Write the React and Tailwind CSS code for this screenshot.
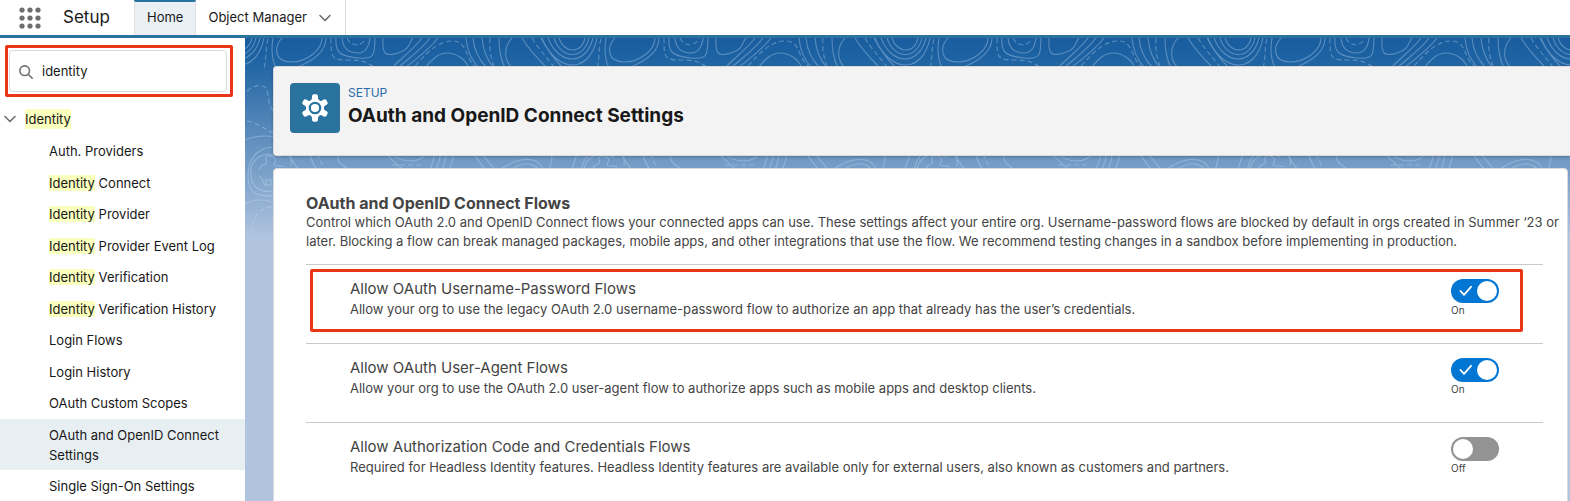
import { useState } from "react";

const navItems = [
  { rest: "Auth. Providers" },
  { mark: true, rest: " Connect" },
  { mark: true, rest: " Provider" },
  { mark: true, rest: " Provider Event Log" },
  { mark: true, rest: " Verification" },
  { mark: true, rest: " Verification History" },
  { rest: "Login Flows" },
  { rest: "Login History" },
  { rest: "OAuth Custom Scopes" },
  { rest: "OAuth and OpenID Connect Settings", active: true },
  { rest: "Single Sign-On Settings" },
];

const flows = [
  {
    id: "username-password",
    title: "Allow OAuth Username-Password Flows",
    text: "Allow your org to use the legacy OAuth 2.0 username-password flow to authorize an app that already has the user’s credentials.",
    on: true,
    highlighted: true,
  },
  {
    id: "user-agent",
    title: "Allow OAuth User-Agent Flows",
    text: "Allow your org to use the OAuth 2.0 user-agent flow to authorize apps such as mobile apps and desktop clients.",
    on: true,
  },
  {
    id: "auth-code",
    title: "Allow Authorization Code and Credentials Flows",
    text: "Required for Headless Identity features. Headless Identity features are available only for external users, also known as customers and partners.",
    on: false,
  },
];

function Mark({ children }) {
  return <mark className="bg-[#faffbd] text-inherit">{children}</mark>;
}

function Chevron({ className }) {
  return (
    <svg viewBox="0 0 12 8" className={className} fill="none" stroke="currentColor" strokeWidth="1.6" strokeLinecap="round" strokeLinejoin="round" aria-hidden="true">
      <path d="M1 1.5 6 6.5 11 1.5" />
    </svg>
  );
}

function Waffle() {
  const at = [3, 11, 19];
  return (
    <svg viewBox="0 0 22 22" className="size-[22px]" fill="#706e6b" aria-hidden="true">
      {at.map((y) => at.map((x) => <circle key={x + "-" + y} cx={x} cy={y} r="2.6" />))}
    </svg>
  );
}

function Gear() {
  const angles = [0, 60, 120, 180, 240, 300];
  return (
    <svg viewBox="0 0 28 28" className="size-7" aria-hidden="true">
      <g fill="#fff">
        <circle cx="14" cy="14" r="9" />
        {angles.map((a) => (
          <path key={a} d="M8.2 8.2Q11 6.4 11 4V2.2A2 2 0 0 1 13 .2H15A2 2 0 0 1 17 2.2V4Q17 6.4 19.8 8.2Z" transform={`rotate(${a} 14 14)`} />
        ))}
      </g>
      <circle cx="14" cy="14" r="5.2" fill="none" stroke="#2a739e" strokeWidth="2.2" />
    </svg>
  );
}

const solidLines = [
  "M37 0C28 10 30 24 46 24S77 12 77 0",
  "M81 0C81 14 66 24 50 30",
  "M28 0C26 12 27 22 31 30",
  "M97 0C98 12 105 15 113 15S124 8 125 0",
  "M91 0C90 14 94 18 113 20S129 14 130 0",
  "M138 0C137 16 140 19 153 15S164 4 168 0",
  "M177 0C168 12 156 20 147 30M185 0C176 12 164 20 153 30M193 0C184 12 172 20 160 30",
  "M180 30C188 20 194 15 202 15S220 20 224 30",
  "M221 0C222 12 226 22 234 30M228 0C229 12 234 22 242 30M237 0C238 12 242 22 249 30M254 0C254 12 256 22 260 30",
  "M267 0C258 10 259 22 267 30",
  "M277 0C284 12 294 22 302 30M296 0C302 12 310 22 318 30",
  "M314 0C319 16 337 16 340 0M309 0C316 22 339 22 344 0M303 0C314 28 341 28 348 0M297 0C312 36 345 36 352 0",
  "M0 102C12 97 24 97 36 100",
  "M40 140C36 158 8 158 6 139S18 112 36 119",
  "M46 128C48 112 40 109 28 109S3 118 3 138 14 158 30 158",
  "M14 132C16 124 24 128 21 122S34 117 30 124 36 126 39 129M14 138C20 140 16 146 22 148M21 142h5v5h-5Z",
  "M0 166C8 160 20 162 30 164",
  "M43 114C45 122 50 126 54 132M64 114C66 122 68 126 72 132M96 114C88 122 96 126 104 132",
  "M140 114C146 122 152 126 158 132M145 114C156 126 176 126 182 114",
  "M190 114C189 122 187 126 185 132M196 114C195 122 193 126 191 132M201 114C201 122 199 126 197 132M209 114C208 122 207 126 204 132",
  "M228 114C232 122 236 126 241 132M236 114C241 122 246 126 250 132",
  "M255 132C268 122 290 114 299 132M265 132C274 126 286 122 294 132",
  "M306 114C308 122 306 126 304 132M333 114C330 122 328 126 327 132",
];

const dashedLines = [
  "M23 1C20 12 22 20 19 30",
  "M86 0C86 20 86 22 104 22S120 25 128 28",
  "M102 0C106 9 117 9 121 0",
  "M170 28C184 12 194 3 208 3S220 20 230 28",
  "M245 0C244 12 246 20 249 28M287 0C294 12 304 22 310 30",
  "M2 53C10 46 20 46 22 52S22 68 31 76",
  "M2 83C12 85 20 91 28 95",
  "M7 195C7 180 12 170 30 168",
  "M72 116C74 120 76 124 79 130M147 127H176",
];

function Contours() {
  return (
    <svg className="absolute inset-x-0 top-0 h-[200px] w-full" aria-hidden="true">
      <defs>
        <g id="contour-tile" fill="none" stroke="#cfe2fa" strokeOpacity="0.34" strokeWidth="1.1">
          <path d={solidLines.join("")} />
          <path d={dashedLines.join("")} strokeDasharray="5 3" />
        </g>
        <pattern id="contours" width="333" height="220" patternUnits="userSpaceOnUse">
          <use href="#contour-tile" />
          <use href="#contour-tile" x="-333" />
        </pattern>
      </defs>
      <rect width="100%" height="100%" fill="url(#contours)" />
    </svg>
  );
}

function Toggle({ id, label, on, onChange }) {
  return (
    <label htmlFor={id} className="mt-px flex w-12 shrink-0 cursor-pointer flex-col">
      <input id={id} type="checkbox" role="switch" aria-label={label} checked={on} onChange={onChange} className="peer sr-only" />
      <span className="flex h-6 items-center justify-start rounded-full bg-[#939393] px-0.5 peer-checked:justify-end peer-checked:bg-[#0176d3]">
        {on && (
          <svg viewBox="0 0 14 12" className="mr-1 h-3 w-3.5" fill="none" stroke="#fff" strokeWidth="1.8" strokeLinecap="round" strokeLinejoin="round" aria-hidden="true">
            <path d="M1.5 6 5 9.8 12 1.8" />
          </svg>
        )}
        <span className="size-5 rounded-full bg-white" />
      </span>
      <span className="text-[10px] leading-[14px] text-[#444]">{on ? "On" : "Off"}</span>
    </label>
  );
}

export default function App() {
  const [query, setQuery] = useState("identity");
  const [state, setState] = useState(flows.map((f) => f.on));
  return (
    <div className="flex h-screen flex-col overflow-hidden bg-white font-['Inter',sans-serif] text-[13px] text-[#181818]">
      <header className="flex h-[38px] shrink-0 items-stretch border-b-3 border-[#2a739e]">
        <button type="button" aria-label="App Launcher" className="flex items-center pr-[22px] pl-[19px]">
          <Waffle />
        </button>
        <span className="flex w-[71px] items-center text-[17px]">Setup</span>
        <nav className="flex">
          <a href="#home" className="flex items-center border-x border-t-2 border-x-[#e0e0e0] border-t-[#2a739e] bg-[#eaf0f4] px-3 pb-0.5">Home</a>
          <a href="#objects" className="flex items-center gap-3 border-r border-[#dddbda] pr-3.5 pl-3">
            Object Manager
            <Chevron className="h-2 w-3 text-[#706e6b]" />
          </a>
        </nav>
      </header>
      <div className="flex min-h-0 flex-1">
        <aside className="flex w-[245px] shrink-0 flex-col">
          <div className="mt-[7px] mr-3 ml-[5px] rounded-xs border-3 border-[#ea3516] py-0.5 pr-[3px] pl-px">
            <label className="flex h-[42px] items-center gap-[9px] rounded border border-[#dddbda] px-[9px] pt-0.5">
              <svg viewBox="0 0 14 14" className="size-3.5 shrink-0" fill="none" stroke="#706e6b" strokeWidth="1.6" strokeLinecap="round" aria-hidden="true">
                <circle cx="5.7" cy="5.7" r="4.8" />
                <path d="m9.2 9.2 4 4" />
              </svg>
              <input aria-label="Quick Find" value={query} onChange={(e) => setQuery(e.target.value)} className="w-full min-w-0 outline-none" />
            </label>
          </div>
          <button type="button" className="mt-3 flex items-center gap-[9px] pl-1 text-left leading-5">
            <Chevron className="h-2 w-3 text-[#706e6b]" />
            <Mark>Identity</Mark>
          </button>
          <ul className="mt-1.5 flex h-[367px] shrink-0 flex-col">
            {navItems.map((item) => (
              <li key={item.rest} className="flex grow">
                <a href="#setup" className={"w-full pt-1.5 pr-6 pb-[5px] pl-[49px] leading-5 " + (item.active ? "bg-[#e8eff3]" : "")}>
                  {item.mark && <Mark>Identity</Mark>}
                  {item.rest}
                </a>
              </li>
            ))}
          </ul>
        </aside>
        <main className="relative min-w-0 flex-1 overflow-hidden bg-[#b0c4df] bg-[linear-gradient(to_bottom,#195d9e_0px,#1d62a2_20px,#b0c4df_200px)]">
          <Contours />
          <div className="relative flex flex-col gap-3 pt-7 pl-7">
            <section className="flex h-[90px] gap-2 rounded-l border border-r-0 border-[#dddbda] bg-[#f3f3f3] p-4 shadow-[0_1px_3px_rgba(0,0,0,0.25)]">
              <span className="flex size-[50px] items-center justify-center rounded bg-[#2a739e]"><Gear /></span>
              <div className="pt-px">
                <p className="text-xs leading-[18px] text-[#2a6ca8]">SETUP</p>
                <h1 className="text-[19px] leading-7 font-bold">OAuth and OpenID Connect Settings</h1>
              </div>
            </section>
            <section className="mr-0.5 h-screen rounded border border-[#dddbda] bg-white pt-6 pr-6 pl-8 text-[#444]">
              <h2 className="text-base leading-5 font-bold">OAuth and OpenID Connect Flows</h2>
              <p className="-mr-5 mb-[13px] leading-[19px]">Control which OAuth 2.0 and OpenID Connect flows your connected apps can use. These settings affect your entire org. Username-password flows are blocked by default in orgs created in Summer ‘23 or later. Blocking a flow can break managed packages, mobile apps, and other integrations that use the flow. We recommend testing changes in a sandbox before implementing in production.</p>
              {flows.map((f, i) => (
                <div key={f.id} className="relative flex h-[79px] justify-between border-t border-[#c9c9c9] px-11 pt-[13px]">
                  <div>
                    <h3 className="text-[15px] leading-[22px]">{f.title}</h3>
                    <p className="leading-[18px]">{f.text}</p>
                  </div>
                  <Toggle id={f.id} label={f.title} on={state[i]} onChange={() => setState(state.map((v, j) => (j === i ? !v : v)))} />
                  {f.highlighted && <div className="pointer-events-none absolute top-1 right-5 bottom-[11px] left-1 rounded-xs border-3 border-[#ea3516]" />}
                </div>
              ))}
            </section>
          </div>
        </main>
      </div>
    </div>
  );
}
